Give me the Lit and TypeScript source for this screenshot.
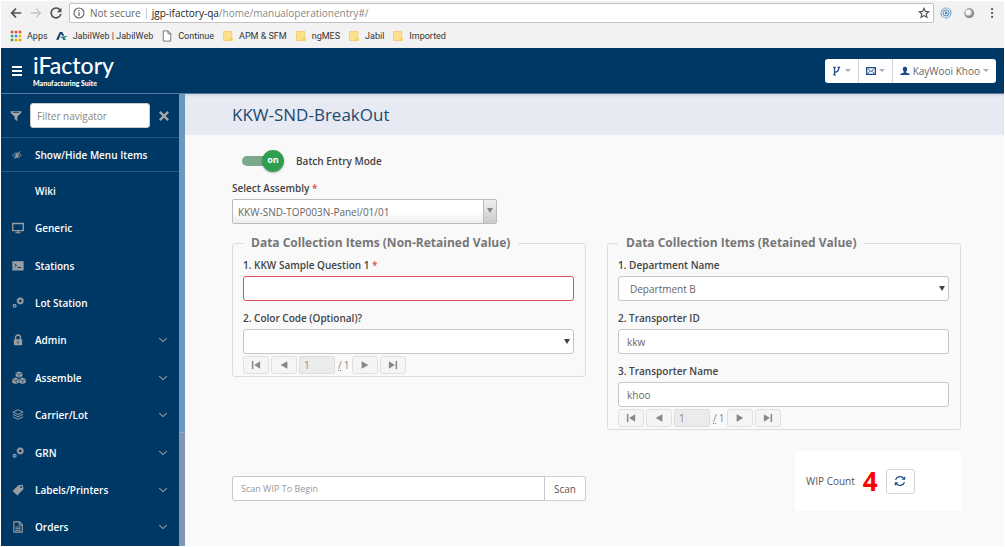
import { LitElement, html, css, svg, nothing } from "lit";
import { customElement, property, state } from "lit/decorators.js";
import { classMap } from "lit/directives/class-map.js";

const icons: Record<string, unknown> = {
  back: svg`<path d="M14 8H3M8 3L3 8l5 5" fill="none" stroke="currentColor" stroke-width="1.8"/>`,
  forward: svg`<path d="M2 8h11M8 3l5 5-5 5" fill="none" stroke="currentColor" stroke-width="1.5"/>`,
  reload: svg`<path d="M12.6 4.6A5.6 5.6 0 1 0 13.6 9" fill="none" stroke="currentColor" stroke-width="1.800"/><path d="M14.200 2v5.200H9z" fill="currentColor"/>`,
  info: svg`<circle cx="8" cy="8" r="6.6" fill="none" stroke="currentColor" stroke-width="1.5"/><path d="M8 7v5M8 4v1.7" stroke="currentColor" stroke-width="1.7"/>`,
  star: svg`<path d="M8 1.8l1.8 4.1 4.5.4-3.4 3 1 4.4L8 11.4l-3.9 2.3 1-4.4-3.4-3 4.5-.4z" fill="none" stroke="currentColor" stroke-width="1.5"/>`,
  sync: svg`<path d="M2 11.500A7 7 0 0 1 10 1.500M14 4.500A7 7 0 0 1 6 14.500" fill="none" stroke="#6b9cc4" stroke-width="1.300"/><path d="M11 2.200l3.200 1.500-.4 3M5 13.800L1.900 12.300l.4-3" fill="none" stroke="#6b9cc4"/><circle cx="8" cy="8" r="4" fill="#dcebf5" stroke="#4b86b8" stroke-width="1.200"/><path d="M6.800 5.800l3.800 2.200-3.800 2.200z" fill="#3f7cb0"/>`,
  orb: svg`<circle cx="8.300" cy="8.300" r="6.500" fill="#858585"/><circle cx="7.400" cy="7.400" r="5" fill="#bdbdbd"/><circle cx="7" cy="7" r="3.400" fill="#f8f8f8"/>`,
  dots: svg`<g fill="#5a5a5a"><rect x="6.8" y="1.5" width="2.6" height="2.6"/><rect x="6.8" y="6.7" width="2.6" height="2.6"/><rect x="6.8" y="11.9" width="2.6" height="2.6"/></g>`,
  apps: svg`<g><path d="M1 1h3.4v3.4H1zM6.3 1h3.4v3.4H6.3zM11.6 1H15v3.4h-3.4z" fill="#dd4b39"/><path d="M1 6.3h3.4v3.4H1z" fill="#3aa757"/><path d="M6.3 6.3h3.4v3.4H6.3z" fill="#4285f4"/><path d="M11.6 6.3H15v3.4h-3.4z" fill="#f4b400"/><path d="M1 11.6h3.4V15H1z" fill="#3aa757"/><path d="M6.3 11.6h3.4V15H6.3zM11.6 11.6H15V15h-3.4z" fill="#f4a000"/></g>`,
  jabil: svg`<path d="M0 13L5 2.500h3.500L11 7.500H8L6.600 5 3.600 13z" fill="#14456f"/><path d="M5 9.200l11-1.700-4.500 2.700 1.800 3H9.800L8.300 10.600z" fill="#1d7a78"/>`,
  page: svg`<path d="M3 1.2h6.5L13 4.8v10H3zM9.3 1.4V5H13" fill="#fff" stroke="#6d6d6d" stroke-width="1.2"/>`,
  folder: svg`<path d="M2 2h11v12H2z" fill="#fde08a" stroke="#efc95f"/><path d="M10 11h4.5v3.5H10z" fill="#f6cf62"/>`,
  filter: svg`<path d="M1 1.5h14v2L9.8 9v6L6.2 12V9L1 3.5z" fill="currentColor"/><ellipse cx="8" cy="3" rx="4.6" ry=".8" fill="#003865"/>`,
  close: svg`<path d="M2.5 2.5l11 11M13.5 2.5l-11 11" stroke="currentColor" stroke-width="3.2"/>`,
  eye: svg`<path d="M1 8.5C4.5 3.5 11.5 3.5 15 8.5 11.5 13 4.500 13 1 8.500z" fill="none" stroke="currentColor" stroke-width="1.4"/><circle cx="8" cy="8.300" r="2.800" fill="currentColor"/><path d="M13 2L4 14" stroke="currentColor" stroke-width="1.500"/>`,
  monitor: svg`<path d="M1 2h14v9.500H1z" fill="none" stroke="currentColor" stroke-width="1.800"/><path d="M7 11.500h2v2h2.500V15h-7v-1.500H7z" fill="currentColor"/>`,
  terminal: svg`<path d="M.5 1.500h15v12.500H.5z" fill="currentColor"/><path d="M3.500 5l2.500 2.200L3.500 9.500M7.500 10h4.500" fill="none" stroke="#003865" stroke-width="1.300"/>`,
  cogs: svg`<circle cx="11" cy="5.200" r="3" fill="none" stroke="currentColor" stroke-width="2.400"/><circle cx="11" cy="5.200" r="4.500" fill="none" stroke="currentColor" stroke-width="1" stroke-dasharray="1.800 1.700"/><circle cx="3.500" cy="11.700" r="1.900" fill="none" stroke="currentColor" stroke-width="1.700"/>`,
  lock: svg`<path d="M2.500 7h11v8h-11z" fill="currentColor"/><path d="M4.800 7V4.500a3.200 3.200 0 0 1 6.400 0V7" fill="none" stroke="currentColor" stroke-width="1.900"/><path d="M8 9.500v3" stroke="#003865" stroke-width="1.400"/>`,
  cubes: svg`<g fill="currentColor"><path d="M8 .5l3.800 1.600v4L8 7.800 4.200 6.100v-4z"/><path d="M4.200 7.500L7.700 9.100v4.200l-3.500 1.900L.3 13.300V9.100z"/><path d="M11.800 7.500l3.900 1.600v4.200l-3.900 1.900-3.500-1.900V9.100z"/></g><path d="M4.800 2.500L8 3.900l3.200-1.400M8 4.500v2.700M1 9.500l3.200 1.500 3-1.500M8.900 9.500l3 1.500 3.200-1.500M4.700 11.500v3M12.300 11.500v3" fill="none" stroke="#003865" stroke-width=".8"/>`,
  layers: svg`<path d="M8 1l6.800 3.200L8 7.400 1.200 4.200zM1.200 7.200L8 10.400l6.800-3.200M1.200 10.500L8 13.700l6.800-3.200" fill="none" stroke="currentColor" stroke-width="1.300"/>`,
  tag: svg`<path d="M8.500 1.500L14.500 1l.8 5.500-8.100 8.700-6.500-6z" fill="currentColor"/><circle cx="12.200" cy="4" r="1.200" fill="#003865"/>`,
  doc: svg`<path d="M2.500 1.200H10L13.700 5v9.800H2.500z" fill="none" stroke="currentColor" stroke-width="1.500"/><path d="M9.500 1.500v4H13.500M4.500 8h7M4.500 10.300h7M4.500 12.500h7" fill="none" stroke="currentColor" stroke-width="1.300"/>`,
  chevron: svg`<path d="M2 5l6 5.500L14 5" fill="none" stroke="currentColor" stroke-width="1.700"/>`,
  branch: svg`<path d="M4 1.500v13M4 10c4.500 0 7-2.500 7-7.500M2 2h4M9 2h4M2 14h4" fill="none" stroke="#1b4a86" stroke-width="2"/>`,
  mail: svg`<path d="M1 2.500h14v11H1z" fill="none" stroke="#1b4a86" stroke-width="2"/><path d="M2.500 4L8 9l5.500-5M2.500 12.500l3.500-4M13.500 12.500l-3.500-4" fill="none" stroke="#1b4a86" stroke-width="1.400"/>`,
  user: svg`<path d="M8 1c2.600 0 3.700 1.700 3.500 4-.2 2-.9 3-1.600 3.800v1.400l4.800 2c.7.400 1 1.300 1 2.300H.3c0-1 .3-1.900 1-2.300l4.800-2V8.800C5.400 8 4.700 7 4.500 5 4.300 2.700 5.400 1 8 1z" fill="#1b4a86"/>`,
  refresh: svg`<path d="M2 6.500C3.500 1.600 10 .8 13 4.500M14 9.500c-1.500 4.900-8 5.700-11 2" fill="none" stroke="#1b4a86" stroke-width="1.700"/><path d="M15 1.500v4.800h-4.800zM1 14.500V9.700h4.800z" fill="#1b4a86"/>`,
  first: svg`<path d="M3.500 2.500v11" stroke="currentColor" stroke-width="2"/><path d="M13.500 3v10L5.500 8z" fill="currentColor"/>`,
  prev: svg`<path d="M12.500 3v10L3.500 8z" fill="currentColor"/>`,
  next: svg`<path d="M3.500 3v10l9-5z" fill="currentColor"/>`,
  last: svg`<path d="M12.500 2.500v11" stroke="currentColor" stroke-width="2"/><path d="M2.500 3v10l8-5z" fill="currentColor"/>`,
};

const icon = (name: string, size = "") =>
  html`<svg class="icon ${size}" viewBox="0 0 16 16" aria-hidden="true">${icons[name]}</svg>`;

const shared = css`
  * { box-sizing: border-box; }
  button, input, select { font: inherit; color: inherit; margin: 0; }
  button { cursor: pointer; }
  a { color: inherit; text-decoration: none; }
  .icon { width: 12px; height: 12px; flex: none; display: block; }
  .icon.small { width: 10px; height: 10px; }
  .icon.large { width: 14px; height: 14px; }
`;

@customElement("browser-bar")
export class BrowserBar extends LitElement {
  static styles = [shared, css`
    :host { display: block; flex: none; background: #f2f2f2; font: 10px/16px "Open Sans", sans-serif; color: #333; padding: 1px 6px 0 8px; }
    .tools { display: flex; align-items: center; height: 22px; gap: 6px; }
    .plain { display: flex; border: 0; padding: 0; background: none; color: #505050; }
    .plain.off { color: #c4c4c4; }
    .address { flex: 1; display: flex; align-items: center; gap: 5px; height: 20px; min-width: 0; padding: 0 3px; border: 1px solid #c3c3c3; border-radius: 2px; background: #fff; color: #666; white-space: nowrap; }
    .rule { width: 1px; height: 11px; background: #ccc; }
    .url { flex: 1; color: #888; }
    .host { color: #222; }
    .extras { display: flex; gap: 11px; }
    .marks { display: flex; align-items: center; height: 24px; gap: 8px; padding-left: 1px; white-space: nowrap; font: 9px/16px Roboto, sans-serif; }
    .mark { display: flex; align-items: center; gap: 5px; }
  `];
  render() {
    const marks = [["apps", "Apps"], ["jabil", "JabilWeb | JabilWeb"], ["page", "Continue"], ["folder", "APM & SFM"], ["folder", "ngMES"], ["folder", "Jabil"], ["folder", "Imported"]];
    return html`
      <div class="tools">
        <button class="plain" aria-label="Back">${icon("back", "large")}</button>
        <button class="plain off" aria-label="Forward">${icon("forward", "large")}</button>
        <button class="plain" aria-label="Reload">${icon("reload", "large")}</button>
        <div class="address">
          ${icon("info")}<span>Not secure</span><span class="rule"></span>
          <span class="url"><span class="host">jgp-ifactory-qa</span>/home/manualoperationentry#/</span>
          <button class="plain" aria-label="Bookmark this page">${icon("star")}</button>
        </div>
        <div class="extras">
          <button class="plain" aria-label="Sync">${icon("sync")}</button>
          <button class="plain" aria-label="Extension">${icon("orb")}</button>
          <button class="plain" aria-label="Menu">${icon("dots")}</button>
        </div>
      </div>
      <nav class="marks" aria-label="Bookmarks">
        ${marks.map(([name, text]) => html`<a class="mark" href="#">${icon(name)}<span>${text}</span></a>`)}
      </nav>`;
  }
}

@customElement("site-header")
export class SiteHeader extends LitElement {
  static styles = [shared, css`
    :host { display: flex; flex: none; align-items: center; height: 46px; padding: 0 8px 0 11px; background: #003865; border-bottom: 1px solid #56789a; color: #fff; font: 10px/16px "Open Sans", sans-serif; }
    .burger { display: grid; gap: 2px; width: 10px; padding: 0; border: 0; background: none; }
    .burger span { height: 2px; background: #fff; }
    .brand { display: grid; margin-left: 11px; }
    .name { font: 500 23px/25px Lato, sans-serif; }
    .suite { font: 900 7px/10px Lato, sans-serif; }
    .group { display: flex; margin-left: auto; height: 24px; border-radius: 3px; background: #fff; color: #666; overflow: hidden; }
    .item { display: flex; align-items: center; gap: 3px; padding: 0 7px; border: 0; border-left: 1px solid #d0d5da; background: none; white-space: nowrap; }
    .item:first-child { border-left: 0; }
    .caret { border: 3px solid transparent; border-top-color: #a3aec0; border-bottom: 0; }
  `];
  render() {
    return html`
      <button class="burger" aria-label="Toggle menu"><span></span><span></span><span></span></button>
      <a class="brand" href="#"><span class="name">iFactory</span><span class="suite">Manufacturing Suite</span></a>
      <div class="group">
        <button class="item" aria-label="Branch">${icon("branch", "small")}<span class="caret"></span></button>
        <button class="item" aria-label="Messages">${icon("mail", "small")}<span class="caret"></span></button>
        <button class="item">${icon("user", "small")}<span>KayWooi Khoo</span><span class="caret"></span></button>
      </div>`;
  }
}

@customElement("side-nav")
export class SideNav extends LitElement {
  static styles = [shared, css`
    :host { display: flex; flex: none; width: 184px; background: #003865; color: #fff; font: 600 10px/16px "Open Sans", sans-serif; }
    .panel { flex: 1; min-width: 0; display: flex; flex-direction: column; }
    .filter { display: flex; align-items: center; gap: 8px; height: 43px; padding: 0 9px; color: #a4a6a8; }
    .field { flex: 1; min-width: 0; height: 25px; padding: 0 6px; border: 1px solid #ccc; border-radius: 3px; background: #fff; color: #555; font-weight: 400; }
    .field::placeholder { color: #888; }
    .clear { padding: 0; border: 0; background: none; }
    .toggle { height: 35px; border-top: 1px solid #1f5a80; border-bottom: 1px solid #1f5a80; }
    .row { display: grid; grid-template-columns: 16px 1fr 12px; column-gap: 7px; align-items: center; padding: 0 9px 0 11px; white-space: nowrap; }
    .row .icon { color: #9b9da0; }
    .menu { flex: 1; display: flex; flex-direction: column; }
    .menu .row { flex: 1; min-height: 36px; }
    .track { flex: none; width: 6px; background: #7f97ae; }
    .thumb { height: 75%; background: #6c97be; border-bottom: 1px solid #8fa9c0; }
  `];
  render() {
    const rows: [string, string, boolean][] = [["", "Wiki", false], ["monitor", "Generic", false], ["terminal", "Stations", false], ["cogs", "Lot Station", false], ["lock", "Admin", true], ["cubes", "Assemble", true], ["layers", "Carrier/Lot", true], ["cogs", "GRN", true], ["tag", "Labels/Printers", true], ["doc", "Orders", true]];
    return html`
      <div class="panel">
        <div class="filter">${icon("filter")}<input class="field" placeholder="Filter navigator" aria-label="Filter navigator" /><button class="clear" aria-label="Clear filter">${icon("close")}</button></div>
        <a class="row toggle" href="#">${icon("eye", "small")}<span>Show/Hide Menu Items</span></a>
        <nav class="menu">
          ${rows.map(([name, text, more]) => html`<a class="row" href="#">${name ? icon(name, name === "cubes" ? "large" : "") : html`<span></span>`}<span>${text}</span>${more ? icon("chevron", "small") : nothing}</a>`)}
        </nav>
      </div>
      <div class="track"><div class="thumb"></div></div>`;
  }
}

interface Question { id: string; label: string; kind: "text" | "select"; value: string; required?: boolean; }

@customElement("question-set")
export class QuestionSet extends LitElement {
  @property() heading = "";
  @property({ attribute: false }) questions: Question[] = [];
  static styles = [shared, css`
    :host { display: block; font: 10px/16px "Open Sans", sans-serif; color: #555; }
    .set { margin: 0; min-width: 0; padding: 6px 11px 2px 10px; border: 1px solid #ddd; border-radius: 3px; }
    .title { padding: 0 8px; font-size: 12px; font-weight: 700; color: #777; }
    .questions { display: grid; gap: 9px; }
    .question { display: grid; gap: 3px; }
    .label { font-weight: 600; color: #444; }
    .star { color: #c9504c; }
    .wrap { position: relative; display: grid; }
    .wrap.drop::after { content: ""; position: absolute; right: 4px; top: 10px; border: 3px solid transparent; border-top: 5px solid #444; border-bottom: 0; }
    .control { width: 100%; height: 25px; padding: 0 8px; border: 1px solid #c4c6c8; border-radius: 3px; background: #fff; appearance: none; outline: 0; color: #666; }
    .drop .control { padding: 0 11px; }
    .control.missing { border-color: #d9534f; }
    .pager { display: flex; gap: 2px; margin-top: 2px; color: #888; }
    .step { display: grid; place-items: center; width: 26px; height: 18px; padding: 0; border: 1px solid #e0e0e0; border-radius: 3px; background: #f5f5f5; }
    .number { width: 36px; height: 18px; padding: 0 4px; border: 1px solid #ddd; border-radius: 2px; background: #ebebeb; }
    .total { display: flex; gap: 2px; padding: 0 1px; line-height: 18px; }
    .slash { text-decoration: underline dotted; }
  `];
  render() {
    const step = (name: string, text: string) => html`<button class="step" aria-label=${text}>${icon(name)}</button>`;
    return html`
      <fieldset class="set">
        <legend class="title">${this.heading}</legend>
        <div class="questions">
          ${this.questions.map((q, i) => html`
            <div class="question">
              <label class="label" for=${q.id}>${i + 1}. ${q.label}${q.required ? html` <span class="star">*</span>` : nothing}</label>
              <div class=${classMap({ wrap: true, drop: q.kind === "select" })}>
                ${q.kind === "select"
                  ? html`<select class="control" id=${q.id}><option>${q.value}</option></select>`
                  : html`<input class=${classMap({ control: true, missing: !!q.required })} id=${q.id} .value=${q.value} />`}
              </div>
            </div>`)}
        </div>
        <div class="pager">
          ${step("first", "First page")}${step("prev", "Previous page")}
          <input class="number" value="1" aria-label="Page" />
          <span class="total"><span class="slash">/</span><span>1</span></span>
          ${step("next", "Next page")}${step("last", "Last page")}
        </div>
      </fieldset>`;
  }
}

@customElement("app-root")
export class AppRoot extends LitElement {
  @state() private batch = true;
  static styles = [shared, css`
    :host { display: flex; flex-direction: column; box-sizing: border-box; min-height: 100vh; padding: 1px; background: #fff; font: 10px/16px "Open Sans", sans-serif; color: #555; }
    .body { flex: 1; display: flex; }
    .main { flex: 1; min-width: 0; background: #f9f9f9; }
    .title { margin: 0; padding: 9px 47px 8px; background: #e7eaf3; box-shadow: inset 0 2px 2px #d5d9e3; font-size: 17px; font-weight: 400; line-height: 24px; color: #1c4a6e; }
    .content { padding: 14px 43px 20px 47px; }
    .batch { display: flex; align-items: center; gap: 12px; height: 24px; margin-left: 10px; font-weight: 600; color: #444; }
    .switch { position: relative; display: grid; align-items: center; width: 42px; height: 22px; }
    .check { appearance: none; width: 36px; height: 10px; border-radius: 5px; background: #7ca88c; }
    .knob { position: absolute; right: 0; top: 0; width: 22px; height: 22px; border-radius: 50%; background: #2f9e4f; box-shadow: 0 1px 2px #0004; color: #fff; font-size: 9px; font-weight: 700; line-height: 20px; text-align: center; pointer-events: none; }
    .assembly { display: grid; gap: 3px; width: 265px; margin-top: 7px; }
    .label { font-weight: 600; color: #444; }
    .star { color: #c9504c; }
    .chosen { position: relative; display: grid; }
    .pick { appearance: none; height: 25px; padding: 0 20px 0 5px; border: 1px solid #bbb; border-radius: 2px; background: linear-gradient(#fff 50%, #eee); color: #666; }
    .arrow { position: absolute; right: 1px; top: 1px; bottom: 1px; width: 13px; border-left: 1px solid #bbb; background: linear-gradient(#eee, #ccc); pointer-events: none; }
    .arrow::after { content: ""; display: block; margin: 8px 3px; border: 3px solid transparent; border-top: 5px solid #888; border-bottom: 0; }
    .grid { display: grid; grid-template-columns: 1fr 1fr; gap: 21px; align-items: start; margin-top: 11px; }
    .scan { display: flex; margin-top: 25px; }
    .entry { flex: 1; min-width: 0; height: 25px; padding: 0 8px; border: 1px solid #c4c6c8; border-radius: 3px 0 0 3px; background: #fff; font-size: 9px; }
    .entry::placeholder { color: #999; }
    .go { height: 25px; padding: 0 9px; border: 1px solid #d0d0d0; border-left: 0; border-radius: 0 3px 3px 0; background: #fff; color: #555; }
    .count { justify-self: end; display: flex; align-items: center; gap: 8px; width: 166px; height: 60px; padding: 0 11px; border-radius: 3px; background: #fff; }
    .value { font: 700 26px/28px "Open Sans", sans-serif; color: #f00; }
    .refresh { display: grid; place-items: center; width: 29px; height: 25px; padding: 0; border: 1px solid #d4d4d4; border-radius: 3px; background: #fff; }
  `];
  private readonly open: Question[] = [
    { id: "sample", label: "KKW Sample Question 1", kind: "text", value: "", required: true },
    { id: "color", label: "Color Code (Optional)?", kind: "select", value: "" },
  ];
  private readonly retained: Question[] = [
    { id: "department", label: "Department Name", kind: "select", value: "Department B" },
    { id: "transporter-id", label: "Transporter ID", kind: "text", value: "kkw" },
    { id: "transporter-name", label: "Transporter Name", kind: "text", value: "khoo" },
  ];
  render() {
    return html`
      <browser-bar></browser-bar>
      <site-header></site-header>
      <div class="body">
        <side-nav></side-nav>
        <main class="main">
          <h1 class="title">KKW-SND-BreakOut</h1>
          <div class="content">
            <label class="batch">
              <span class="switch"><input class="check" type="checkbox" .checked=${this.batch} @change=${() => (this.batch = !this.batch)} /><span class="knob">${this.batch ? "on" : "off"}</span></span>
              <span>Batch Entry Mode</span>
            </label>
            <div class="assembly">
              <label class="label" for="assembly">Select Assembly <span class="star">*</span></label>
              <div class="chosen"><select class="pick" id="assembly"><option>KKW-SND-TOP003N-Panel/01/01</option></select><span class="arrow"></span></div>
            </div>
            <div class="grid">
              <question-set heading="Data Collection Items (Non-Retained Value)" .questions=${this.open}></question-set>
              <question-set heading="Data Collection Items (Retained Value)" .questions=${this.retained}></question-set>
              <form class="scan"><input class="entry" placeholder="Scan WIP To Begin" aria-label="Scan WIP" /><button class="go" type="button">Scan</button></form>
              <div class="count"><span>WIP Count</span><span class="value">4</span><button class="refresh" aria-label="Refresh count">${icon("refresh")}</button></div>
            </div>
          </div>
        </main>
      </div>`;
  }
}
